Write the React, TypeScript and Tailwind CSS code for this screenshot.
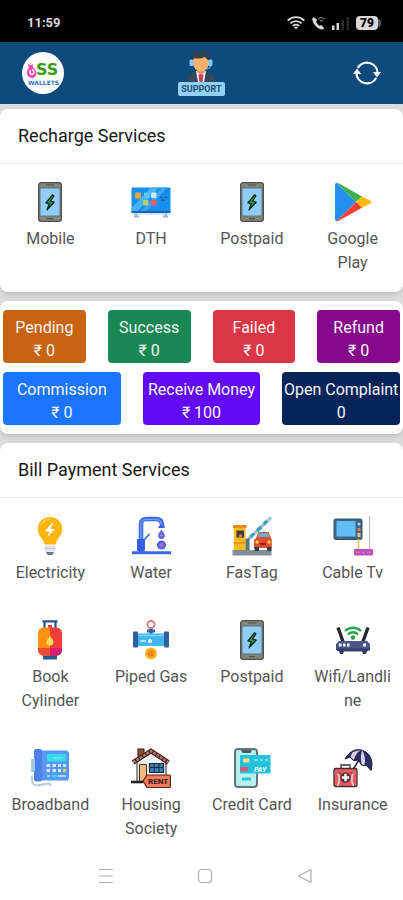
import type { ReactNode } from "react";

type Service = { name: string; icon: ReactNode };
type Stat = { label: string; value: string; color: string };

const PhoneIcon = () => (
  <svg viewBox="0 0 40 40" className="h-10 w-10" aria-hidden="true">
    <rect x="8.6" y="0.6" width="22.8" height="38.8" rx="2.6" fill="#85857b" stroke="#4c4f4c" strokeWidth="1.2" />
    <rect x="10" y="6" width="20" height="28" fill="#8fcdf6" stroke="#56636b" strokeWidth="0.8" />
    <path d="M16 3h8M17 36.6h6" stroke="#4c4f4c" strokeWidth="1.2" />
    <path d="M22.5 12.8l-6.6 8 3.4 1-2.2 6 7-7.6-3.6-1.2 3.4-5z" fill="#1f9a4b" stroke="#10231a" strokeWidth="1.3" strokeLinejoin="round" />
  </svg>
);

const TvIcon = () => (
  <svg viewBox="0 0 40 40" className="h-10 w-10" aria-hidden="true">
    <rect x="0.5" y="5.5" width="39" height="25" rx="1" fill="#1590ee" />
    <path d="M0.5 30.5V26L20 5.500h8L5 30.500z" fill="#46b4f6" />
    <path d="M9 30.500L31 5.500h5L14 30.500z" fill="#38a6f2" />
    <rect x="0.5" y="29" width="39" height="2" fill="#1862bd" />
    <rect x="4" y="10.500" width="6" height="6" rx="0.8" fill="#f5a33c" />
    <rect x="13" y="10.500" width="5.500" height="5.500" rx="0.8" fill="#5cc9f5" />
    <rect x="20" y="10.500" width="5.500" height="5.500" rx="0.8" fill="#cfe5f8" />
    <rect x="12" y="18" width="5.500" height="5.500" rx="0.8" fill="#b8ce73" />
    <rect x="20" y="18" width="5.500" height="5.500" rx="0.8" fill="#f0586a" />
    <path d="M29 15.500h3M33.500 15.500h3M30 18h4" stroke="#1c5db0" strokeWidth="1.4" />
    <path d="M3 34.500h5M32 34.500h5M5 31v3M35 31v3" stroke="#9db4cc" strokeWidth="1.800" />
    <path d="M1 32h38" stroke="#b5c9dd" strokeWidth="1.200" />
  </svg>
);

const PlayIcon = () => (
  <svg viewBox="0 0 40 40" className="h-10 w-10" aria-hidden="true">
    <path d="M2 2.5v35c0 1 .8 1.7 1.6 1.7L23 20 3.6.8C2.8.8 2 1.5 2 2.5z" fill="#2391f3" />
    <path d="M3.6.8c.6-.2 1.3 0 2 .4L29 14.4 23 20z" fill="#3fae4c" />
    <path d="M29 14.4l8.4 4.2c1.2.7 1.2 2.2 0 2.9L29 25.7 23 20z" fill="#fdbb0f" />
    <path d="M3.6 39.2c.6.2 1.3 0 2-.4L29 25.7 23 20z" fill="#f23d36" />
  </svg>
);

const BulbIcon = () => (
  <svg viewBox="0 0 40 40" className="h-10 w-10" aria-hidden="true">
    <path d="M20 1c7 0 12.3 5.3 12.3 12 0 5-2.8 7.6-4.8 10.6-1.3 2-1.5 3.4-1.7 5H14.2c-.2-1.6-.4-3-1.7-5-2-3-4.8-5.6-4.8-10.6C7.7 6.3 13 1 20 1z" fill="#fbb50c" />
    <path d="M12 8c2-3.5 5-5 8-5" stroke="#ffd24a" strokeWidth="1.6" fill="none" />
    <path d="M22 7l-7 8 4.2 1-2 5.5 7.4-8-4.2-1 3-5.5z" fill="#fffdf5" />
    <rect x="14.5" y="29.5" width="11" height="6" rx="1" fill="#dfe4ee" />
    <path d="M14.5 32.5h11" stroke="#bcc6d7" />
    <path d="M16 36h8l-1.5 3h-5z" fill="#707989" />
  </svg>
);

const TapIcon = () => (
  <svg viewBox="0 0 40 40" className="h-10 w-10" aria-hidden="true">
    <path d="M10 36V8c0-3 2-5 5-5h10c4 0 6 2.2 6 6v2" fill="none" stroke="#3f6fe8" strokeWidth="4.6" />
    <path d="M10 34V8c0-3 2-4.5 5-4.5h10c4 0 5.5 2 5.5 5" fill="none" stroke="#7ba2f8" strokeWidth="1.2" />
    <path d="M27.5 11h6" stroke="#3153c8" strokeWidth="1.8" />
    <rect x="6" y="23" width="8" height="12" rx="1" fill="#335ee0" />
    <path d="M13 24l5-5.5" stroke="#3e69e0" strokeWidth="1.8" strokeLinecap="round" />
    <path d="M1 36.8h39" stroke="#3b67e6" strokeWidth="3" />
    <path d="M30.5 13.5c2 3 3.4 4.2 3.4 6a3.4 3.4 0 0 1-6.8 0c0-1.8 1.4-3 3.4-6z" fill="#6069d6" />
    <circle cx="30.5" cy="29" r="4.6" fill="#5464db" />
    <circle cx="30.5" cy="29" r="2" fill="#b266c8" />
    <path d="M29 19.5h3" stroke="#c27ad2" strokeWidth="1.5" />
  </svg>
);

const TollIcon = () => (
  <svg viewBox="0 0 40 40" className="h-10 w-10" aria-hidden="true">
    <rect x="0.5" y="34" width="39" height="5.5" fill="#7f9092" />
    <rect x="2" y="11" width="11.5" height="23" fill="#f8ba1c" />
    <path d="M1 9h13.5v3H1z" fill="#e98d16" />
    <rect x="4.5" y="14.5" width="7.5" height="7" fill="#3e3a3f" />
    <path d="M7 21.5v-3h3v3z" fill="#c9884b" />
    <path d="M2 27h11.5" stroke="#de8a10" strokeWidth="1.4" />
    <path d="M15.5 24L39 1.5" stroke="#acbcc8" strokeWidth="3.2" />
    <path d="M18.5 21l3.5-3.3M25 15l4-4M32 8l3-3" stroke="#2ca2cf" strokeWidth="3.2" />
    <path d="M13.5 34V23l4-1v12z" fill="#5c737e" />
    <path d="M24 22l2.5-6h10l2.5 6 .8 2v8H22v-8z" fill="#e44c32" />
    <path d="M25.500 21l1.700-4h8.500l1.700 4z" fill="#5cb7df" />
    <path d="M22 31h5v4h-4zM34.500 31h5v4h-4z" fill="#2f3e46" />
    <circle cx="25" cy="26" r="1.7" fill="#ffcf3e" />
    <circle cx="37" cy="26" r="1.7" fill="#ffcf3e" />
    <path d="M28 28h6" stroke="#8c281f" strokeWidth="2" />
  </svg>
);

const CableIcon = () => (
  <svg viewBox="0 0 40 40" className="h-10 w-10" aria-hidden="true">
    <rect x="1" y="3" width="28" height="20.5" rx="1.5" fill="#3e6687" stroke="#31506b" strokeWidth="1" />
    <rect x="3.5" y="5" width="19" height="15.5" rx="1" fill="#63bdf6" />
    <circle cx="26" cy="8" r="1.5" fill="#a9d5ed" />
    <circle cx="26" cy="13.5" r="1.8" fill="#e07663" />
    <rect x="24.5" y="17" width="3" height="4" fill="#f2c65f" />
    <path d="M25.5 23v10" stroke="#f0c556" strokeWidth="1.6" />
    <path d="M36.5 0v33" stroke="#b8bbc2" strokeWidth="1.2" />
    <rect x="21" y="33" width="19" height="6.5" rx="1" fill="#b54fc5" />
    <path d="M23 36.3h4M29 36.3h3M34 36.3h4" stroke="#f36f9b" strokeWidth="1.8" />
  </svg>
);

const CylinderIcon = () => (
  <svg viewBox="0 0 40 40" className="h-10 w-10" aria-hidden="true">
    <path d="M12.5 1.3h15M14.5 1v8M25.5 1v8" stroke="#27558d" strokeWidth="2.2" />
    <path d="M18 5h4v5h-4z" fill="#dc3e42" />
    <rect x="13" y="33" width="14" height="6.5" fill="#2d5b91" />
    <path d="M20 7.5v28h-6.5a5.5 5.5 0 0 1-5.5-5.5V13a5.5 5.5 0 0 1 5.5-5.5z" fill="#fb910f" />
    <path d="M20 7.5v28h6.5a5.5 5.5 0 0 0 5.5-5.5V13a5.5 5.5 0 0 0-5.5-5.5z" fill="#ee4036" />
    <path d="M8 28h12v7.5h-6.500A5.500 5.500 0 0 1 8 30z" fill="#ef4937" />
    <path d="M20 28h12v2a5.500 5.500 0 0 1-5.500 5.500H20z" fill="#d51f73" />
    <path d="M20 15c.4 3 3.5 4 3.5 7a3.5 3.5 0 0 1-7 0c0-2.2 2.5-3.5 3.500-7z" fill="#ffdc57" />
  </svg>
);

const PipeIcon = () => (
  <svg viewBox="0 0 40 40" className="h-10 w-10" aria-hidden="true">
    <path d="M20 7v8M16 11h8" stroke="#326298" strokeWidth="3" />
    <circle cx="20" cy="4.5" r="3.6" fill="#fff" stroke="#dc808b" strokeWidth="2" />
    <rect x="4" y="13.5" width="32" height="12.5" fill="#42b6ef" />
    <path d="M6 15.5h28" stroke="#79d3f9" strokeWidth="1.5" />
    <rect x="2" y="11.5" width="5" height="16" rx="1" fill="#315f9e" />
    <rect x="33" y="11.5" width="5" height="16" rx="1" fill="#315f9e" />
    <path d="M9 21h6" stroke="#fff" strokeWidth="1.2" />
    <circle cx="19" cy="21" r="2" fill="#fff" />
    <circle cx="20" cy="33.5" r="6" fill="#fbb21b" />
    <circle cx="20" cy="33.5" r="3.2" fill="#f38320" />
  </svg>
);

const RouterIcon = () => (
  <svg viewBox="0 0 40 40" className="h-10 w-10" aria-hidden="true">
    <path d="M5 7.5l5 14M35 7.5l-5 14" stroke="#252832" strokeWidth="3.4" />
    <path d="M12 11a11.500 11.500 0 0 1 16 0M15 14.300a7 7 0 0 1 10 0" fill="none" stroke="#27a449" strokeWidth="2.4" />
    <circle cx="20" cy="17.500" r="2.200" fill="#27a449" />
    <path d="M6 21h28l3 3v5.500l-3 1.500H6l-3-1.500V24z" fill="#4b5787" />
    <path d="M3 28.5h34v1.5l-3 1.5H6L3 30z" fill="#353f69" />
    <path d="M6 31h5l-1 3H7zM29 31h5l-1 3h-3z" fill="#343e65" />
    <path d="M6 23.500h2.500v3H6zM10 23.500h2.500v3H10zM14 23.500h2.500v3H14zM30 23.500h3v3h-3z" fill="#f6fbff" />
  </svg>
);

const DeskPhoneIcon = () => (
  <svg viewBox="0 0 40 40" className="h-10 w-10" aria-hidden="true">
    <path d="M2 28v4c0 5 3 6 8 5l5-1c4-1 6 0 5 2" fill="none" stroke="#b8c7dc" strokeWidth="1.8" />
    <path d="M11 2.5h26l2 2V30l-1 2.5H11z" fill="#5798f2" />
    <rect x="1" y="11" width="4" height="13" fill="#a8c6ee" />
    <path d="M4 3c0-3 8-3 8 0v29c0 2-8 2-8 0V24l1-2V12L4 10z" fill="#4c82e8" />
    <rect x="17" y="6" width="19" height="7.5" fill="#36dced" />
    <path d="M24 10h9" stroke="#75edf5" />
    <g fill="#d4e8ff">
      <rect x="16.5" y="16" width="3.5" height="3" />
      <rect x="22.5" y="16" width="3.5" height="3" />
      <rect x="28" y="16" width="3" height="3" />
      <rect x="16.5" y="21" width="3.5" height="3" />
      <rect x="22.5" y="21" width="3.5" height="3" />
      <rect x="28" y="21" width="3" height="3" />
      <rect x="33" y="16" width="3" height="3" />
    </g>
    <circle cx="34.5" cy="22.5" r="1.7" fill="#ffd15a" />
    <path d="M17 28h3M28 28h8" stroke="#b4d5ff" strokeWidth="2.2" />
    <path d="M22 28h5" stroke="#36dced" strokeWidth="2.2" />
  </svg>
);

const RentIcon = () => (
  <svg viewBox="0 0 40 40" className="h-10 w-10" aria-hidden="true">
    <rect x="7" y="1" width="6" height="9" fill="#9b4837" stroke="#272020" />
    <path d="M6 14L20 4l15 10v20H6z" fill="#eef1f5" stroke="#2c2828" />
    <path d="M8.5 16.5h7V34h-7z" fill="#f5ba80" stroke="#3b3029" />
    <path d="M18.5 15.5h14v9h-14z" fill="#367fba" stroke="#202831" strokeWidth="1.2" />
    <path d="M23.2 15.5v9M28 15.5v9M18.5 19.5h14" stroke="#202831" />
    <path d="M2 14.5L20 3l17.5 11.5" fill="none" stroke="#2c2020" strokeWidth="4.6" />
    <path d="M2 14.5L20 3l17.5 11.5" fill="none" stroke="#c97060" strokeWidth="2.5" strokeDasharray="3 1" />
    <path d="M0 34h12" stroke="#27201f" strokeWidth="2.6" />
    <path d="M12 33l4-6h22c1 0 1.5.6 1.5 1.5v9.5c0 1-.5 1.5-1.5 1.5H16z" fill="#f37b5b" stroke="#55241b" strokeWidth="1.2" />
    <text x="17" y="36" fill="#38150f" fontFamily="Roboto, sans-serif" fontSize="8" fontWeight="700">RENT</text>
  </svg>
);

const CardPayIcon = () => (
  <svg viewBox="0 0 40 40" className="h-10 w-10" aria-hidden="true">
    <rect x="3" y="1" width="22" height="38" rx="3" fill="#b7f1ec" stroke="#68757c" strokeWidth="2" />
    <path d="M9 2h11l-1.5 3h-8z" fill="#505960" />
    <rect x="8" y="7" width="30.5" height="18.5" rx="1.2" fill="#22c3dd" />
    <rect x="11" y="10.5" width="6.5" height="4" rx="0.8" fill="#f4dc8a" />
    <path d="M22 12h4M28 12h3M33 12h3" stroke="#95e4ef" strokeWidth="1.5" />
    <rect x="8" y="19" width="8" height="4" fill="#e4516c" />
    <text x="22" y="23.5" fill="#fff" fontFamily="Roboto, sans-serif" fontSize="7" fontStyle="italic" fontWeight="700">PAY</text>
    <path d="M10 31h9" stroke="#2bc4d9" strokeWidth="3" />
  </svg>
);

const InsuranceIcon = () => (
  <svg viewBox="0 0 40 40" className="h-10 w-10" aria-hidden="true">
    <path d="M27 10l-9 15" stroke="#333442" strokeWidth="1.6" />
    <path d="M12 11C17 2 25-.5 32 3.5s8 12 6 19l-4.5-5-5-.5-3-5-5 .5-3.5-3.5z" fill="#2c2d68" stroke="#161723" strokeLinejoin="round" />
    <path d="M20 4c-1.5 2-2.5 4-2 5.500l3 2.500c.5-4 3-7.500 6.500-10zM29 2c-1 5-1.500 8.500-.5 14l3 1c1-5 .5-10-2.500-15z" fill="#d6d5e6" />
    <path d="M8 20v-3h9v3" fill="none" stroke="#61666c" strokeWidth="1.8" />
    <rect x="1" y="20.5" width="23" height="18" rx="1.6" fill="#ed5962" stroke="#432d31" strokeWidth="1.3" />
    <path d="M1.6 25h3l1.4 3v6l-1.5 4M23.4 25h-3L19 28v6l1.5 4" fill="none" stroke="#e8d7d7" strokeWidth="1.5" />
    <path d="M1.5 25H8M17 25h6.5" stroke="#7a2e37" />
    <circle cx="12.5" cy="29.5" r="5.2" fill="#4e3036" />
    <path d="M12.5 25.8v7.400M8.800 29.500h7.400" stroke="#fff" strokeWidth="2.5" />
  </svg>
);

const rechargeServices: Service[] = [
  { name: "Mobile", icon: <PhoneIcon /> },
  { name: "DTH", icon: <TvIcon /> },
  { name: "Postpaid", icon: <PhoneIcon /> },
  { name: "Google Play", icon: <PlayIcon /> },
];

const billServices: Service[] = [
  { name: "Electricity", icon: <BulbIcon /> },
  { name: "Water", icon: <TapIcon /> },
  { name: "FasTag", icon: <TollIcon /> },
  { name: "Cable Tv", icon: <CableIcon /> },
  { name: "Book Cylinder", icon: <CylinderIcon /> },
  { name: "Piped Gas", icon: <PipeIcon /> },
  { name: "Postpaid", icon: <PhoneIcon /> },
  { name: "Wifi/Landline", icon: <RouterIcon /> },
  { name: "Broadband", icon: <DeskPhoneIcon /> },
  { name: "Housing Society", icon: <RentIcon /> },
  { name: "Credit Card", icon: <CardPayIcon /> },
  { name: "Insurance", icon: <InsuranceIcon /> },
];

const statusStats: Stat[] = [
  { label: "Pending", value: "₹ 0", color: "bg-[#c8640f]" },
  { label: "Success", value: "₹ 0", color: "bg-[#198754]" },
  { label: "Failed", value: "₹ 0", color: "bg-[#dc3545]" },
  { label: "Refund", value: "₹ 0", color: "bg-[#85078a]" },
];

const moneyStats: Stat[] = [
  { label: "Commission", value: "₹ 0", color: "bg-[#1a74fd]" },
  { label: "Receive Money", value: "₹ 100", color: "bg-[#6209f5]" },
  { label: "Open Complaint", value: "0", color: "bg-[#06245a]" },
];

function StatusBar() {
  return (
    <div className="flex h-[42px] items-center justify-between bg-black pt-1 pr-[22px] pl-[27px] text-[#d8d8d8]">
      <span className="text-[13px] font-bold">11:59</span>
      <div className="flex items-center gap-[7px]">
        <svg viewBox="0 0 18 14" className="h-3.5 w-[18px]" fill="none" stroke="currentColor" strokeWidth="1.8" aria-hidden="true">
          <path d="M.7 4.500a12 12 0 0 1 16.600 0M3.300 7.300a8.300 8.300 0 0 1 11.400 0M5.900 10a4.500 4.500 0 0 1 6.200 0" />
          <path d="M9 13.600l-1.900-2.200a2.700 2.700 0 0 1 3.800 0z" fill="currentColor" stroke="none" />
        </svg>
        <svg viewBox="0 0 13 14" className="h-3.5 w-[13px]" fill="none" aria-hidden="true">
          <path d="M1.500 1C-.5 2.500 0 6 3.300 9.700s7 4.800 8.900 2.700L9.500 9 7.300 9.800C5.800 8.600 4.800 7.300 4.200 5.800l1-2z" fill="currentColor" />
          <path d="M6.500 3a4 4 0 0 1 6 0M8 5.200a2 2 0 0 1 3 0" stroke="#777" strokeWidth="1.300" />
        </svg>
        <svg viewBox="0 0 17 14" className="h-3.5 w-[17px]" aria-hidden="true">
          <path d="M0 9.500h2.500V14H0zM4.500 7H7v7H4.500z" fill="currentColor" />
          <path d="M9.500 4H12v10H9.500zM14.500 1H17v13h-2.500z" fill="#292929" />
        </svg>
        <div className="flex items-center">
          <span className="rounded-[4px] bg-[#d8d8d8] px-1 text-xs leading-[14px] font-black text-black">79</span>
          <span className="h-2 w-[3px] rounded-r-sm bg-[#555]" />
        </div>
      </div>
    </div>
  );
}

function Header() {
  return (
    <header className="grid h-[62px] grid-cols-3 items-center bg-[#0e4a7b] px-[22px]">
      <svg viewBox="0 0 42 42" className="h-[42px] w-[42px]" role="img" aria-label="SS Wallets">
        <circle cx="21" cy="21" r="21" fill="#fff" />
        <path d="M6 11.500c2 2 3.500 2 4.500 0l.8 4.500c4.500 2 4 10-1 10s-7.500-6-3.500-10z" fill="#f04cb3" />
        <path d="M8.500 18.500c-1.500 2 .5 5 2.500 3.500s.5-4-1-4" fill="none" stroke="#fff" strokeWidth="1.4" />
        <text x="14" y="23" fill="#3a9c12" fontFamily="DejaVu Sans, sans-serif" fontSize="16" fontWeight="700">SS</text>
        <text x="6" y="33" fill="#3573c8" fontFamily="DejaVu Sans, sans-serif" fontSize="6" fontWeight="700">WALLETS</text>
      </svg>
      <button type="button" className="flex flex-col items-center justify-self-center">
        <svg viewBox="0 0 36 31" className="h-[31px] w-9" aria-hidden="true">
          <path d="M4 31c0-7 4-9.500 9-10.500h10c5 1 9 3.500 9 10.500z" fill="#35485c" />
          <path d="M13 20h10l-2 11h-6z" fill="#f3f5fa" />
          <path d="M18 22l2.500 2-1 7h-3l-1-7z" fill="#d23c54" />
          <path d="M14 16h8v5l-4 3-4-3z" fill="#e49559" />
          <path d="M9.500 10c0-6 17-6 17 0 0 6-4 10.500-8.500 10.500S9.500 16 9.500 10z" fill="#fbb16e" />
          <path d="M9 10C8 3 12 0 18 0s10 3 9 10c-3-1-4-3-5-4.500C19 8 14 8 11.500 7z" fill="#34414f" />
          <rect x="6.5" y="8.5" width="4" height="6.5" rx="1.5" fill="#7ecbfa" />
          <rect x="25.5" y="8.5" width="4" height="6.5" rx="1.5" fill="#7ecbfa" />
          <path d="M27.500 15c0 2.500-3 3-6 3" stroke="#7ecbfa" fill="none" />
        </svg>
        <span className="rounded-xs bg-[#91d1f8] px-[3px] text-[9px] leading-[14px] font-bold text-[#254d70]">SUPPORT</span>
      </button>
      <button type="button" aria-label="Refresh" className="justify-self-end">
        <svg viewBox="0 0 28 24" className="h-6 w-7" fill="none" stroke="#fff" strokeWidth="2.2" aria-hidden="true">
          <path d="M4.800 7A10.600 10.600 0 0 1 24.600 12M23.200 17A10.600 10.600 0 0 1 3.400 12" />
          <path d="M0 13l4-5.500L8.200 13zM28 11l-4 5.500-4.200-5.500z" fill="#fff" stroke="none" />
        </svg>
      </button>
    </header>
  );
}

function ServiceCard({ title, services, className }: { title: string; services: Service[]; className?: string }) {
  return (
    <section className={`rounded-lg bg-white shadow-md ${className ?? ""}`}>
      <h2 className="border-b border-[#ececec] px-[18px] py-[15px] text-lg leading-6 font-normal text-[#181818]">{title}</h2>
      <div className="grid grid-cols-4 items-start gap-y-[35px] pt-[18px]">
        {services.map((service, i) => (
          <button key={i} type="button" className="flex flex-col items-center gap-[5px] px-2.5">
            {service.icon}
            <span className="w-full text-center text-base leading-6 font-normal wrap-anywhere text-[#555]">{service.name}</span>
          </button>
        ))}
      </div>
    </section>
  );
}

function StatRow({ stats, className }: { stats: Stat[]; className: string }) {
  return (
    <div className={`grid gap-[22px] ${className}`}>
      {stats.map((stat) => (
        <button
          key={stat.label}
          type="button"
          className={`flex flex-col items-center rounded-[4px] pt-1.5 pb-px text-base leading-[23px] whitespace-nowrap text-[#f4f4f4] ${stat.color}`}
        >
          <span>{stat.label}</span>
          <span>{stat.value}</span>
        </button>
      ))}
    </div>
  );
}

function SystemNav() {
  return (
    <nav className="grid grid-cols-3 items-center justify-items-center bg-white pt-[27px] pr-12 pb-4 pl-14">
      <button type="button" aria-label="Recent apps">
        <svg viewBox="0 0 16 16" className="h-4 w-4" stroke="#b0b0b0" strokeWidth="1.2" aria-hidden="true">
          <path d="M1 1.500h14M1 8h14M1 14.500h14" />
        </svg>
      </button>
      <button type="button" aria-label="Home">
        <svg viewBox="0 0 16 16" className="h-4 w-4" fill="none" stroke="#b0b0b0" strokeWidth="1.2" aria-hidden="true">
          <rect x="1.5" y="1.5" width="13" height="13" rx="3" />
        </svg>
      </button>
      <button type="button" aria-label="Back">
        <svg viewBox="0 0 16 16" className="h-4 w-4" fill="none" stroke="#b0b0b0" strokeWidth="1.2" strokeLinejoin="round" aria-hidden="true">
          <path d="M14 1.500v13L1.500 8z" />
        </svg>
      </button>
    </nav>
  );
}

export default function App() {
  return (
    <div className="flex min-h-screen flex-col bg-[#dcdcdc] font-['Roboto',sans-serif]">
      <StatusBar />
      <Header />
      <main className="flex grow flex-col gap-[9px] pt-[5px]">
        <ServiceCard title="Recharge Services" services={rechargeServices} className="pb-[17px]" />
        <section className="flex flex-col gap-[9px] rounded-lg bg-white px-[3px] py-[9px] shadow-md">
          <StatRow stats={statusStats} className="grid-cols-4" />
          <StatRow stats={moneyStats} className="grid-cols-3" />
        </section>
        <ServiceCard title="Bill Payment Services" services={billServices} className="grow rounded-b-none" />
      </main>
      <SystemNav />
    </div>
  );
}
